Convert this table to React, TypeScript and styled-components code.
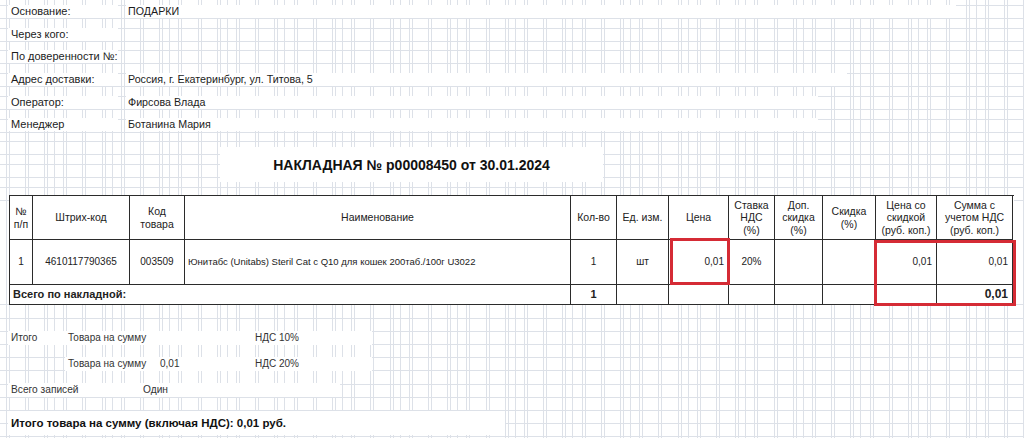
import React from "react";
import styled, { createGlobalStyle } from "styled-components";

const LINE = "#dde1e8";

const vLines: number[] = [];
for (let k = -18; k <= 37; k++) {
  const x = 332 + 19.2 * k;
  if (x >= 0 && x <= 1024) {
    vLines.push(Math.round(x));
    vLines.push(Math.round(x + 3));
  }
  if (k % 3 === 0) {
    const s = Math.round(x + 10);
    if (s >= 0 && s <= 1024) vLines.push(s);
  }
}
const hLines: number[] = [];
for (let k = 0; k < 9; k++) {
  hLines.push(Math.round(5 + 22.7 * k));
  hLines.push(Math.round(18 + 22.7 * k));
}
for (let k = 0; k < 11; k++) hLines.push(Math.round(304.4 + 13.2 * k));

const gridLayers = [
  ...vLines.map(() => `linear-gradient(${LINE}, ${LINE})`),
  ...hLines.map(() => `linear-gradient(${LINE}, ${LINE})`),
].join(",");
const gridPos = [
  ...vLines.map((x) => `${x}px 0`),
  ...hLines.map((y) => `0 ${y}px`),
].join(",");
const gridSize = [
  ...vLines.map(() => `1px 100%`),
  ...hLines.map(() => `100% 1px`),
].join(",");

const Global = createGlobalStyle`
  html, body { margin: 0; padding: 0; background: #fff; }
  body { font-family: "Liberation Sans", Arial, sans-serif; color: #1c1c1c; }
`;

const Page = styled.div`
  width: 1024px;
  height: 438px;
  overflow: hidden;
  background-color: #fff;
  background-image: ${gridLayers};
  background-position: ${gridPos};
  background-size: ${gridSize};
  background-repeat: no-repeat;
  display: flex;
  flex-direction: column;
  & > * {
    flex-shrink: 0;
  }
`;

const Info = styled.div`
  display: flex;
  flex-direction: column;
  padding-top: 5px;
`;

const InfoRow = styled.div`
  height: 22.7px;
  display: flex;
  align-items: flex-start;
`;

const Label = styled.div`
  margin-left: 8px;
  width: 110px;
  height: 13px;
  padding-left: 3px;
  box-sizing: border-box;
  background: #fff;
  font-size: 11px;
  line-height: 13px;
  white-space: nowrap;
`;

const Value = styled.div<{ $w: number }>`
  margin-left: 8px;
  width: ${(p) => p.$w}px;
  height: 13px;
  padding-left: 2px;
  box-sizing: border-box;
  background: #fff;
  font-size: 10.7px;
  line-height: 13px;
  white-space: nowrap;
`;

const TitleBand = styled.div`
  margin: 6px 0 0 220px;
  width: 383px;
  height: 35px;
  background: #fff;
  display: flex;
  align-items: center;
  justify-content: center;
  font-weight: bold;
  font-size: 14px;
  color: #111;
`;

const Table = styled.div`
  position: relative;
  margin: 13px 0 0 9px;
  width: 1005px;
  box-sizing: border-box;
  border-left: 1px solid #2b2b2b;
  border-top: 1px solid #2b2b2b;
  display: grid;
  grid-template-columns: 23px 97px 55px 386px 46px 52px 60px 46px 48px 53px 61px 76px;
  grid-template-rows: 44px 45px 20px;
  background: #fff;
`;

const Cell = styled.div<{ $align?: "left" | "center" | "right"; $bold?: boolean; $span?: number; $size?: number }>`
  border-right: 1px solid #2b2b2b;
  border-bottom: 1px solid #2b2b2b;
  display: flex;
  align-items: center;
  justify-content: ${(p) => (p.$align === "left" ? "flex-start" : p.$align === "right" ? "flex-end" : "center")};
  text-align: ${(p) => p.$align ?? "center"};
  padding: 0 ${(p) => (p.$align === "right" ? 4 : 1)}px 0 ${(p) => (p.$align === "left" ? 3 : 1)}px;
  font-size: ${(p) => p.$size ?? 10}px;
  line-height: 12.5px;
  font-weight: ${(p) => (p.$bold ? "bold" : "normal")};
  grid-column: ${(p) => (p.$span ? `span ${p.$span}` : "auto")};
  white-space: pre-line;
  color: #222;
`;

const RedFrame = styled.div<{ $l: number; $t: number; $w: number; $h: number }>`
  position: absolute;
  left: ${(p) => p.$l}px;
  top: ${(p) => p.$t}px;
  width: ${(p) => p.$w}px;
  height: ${(p) => p.$h}px;
  box-sizing: border-box;
  border: 3px solid #d52b35;
  pointer-events: none;
`;

const Summary = styled.div`
  display: flex;
  flex-direction: column;
  margin-top: 25px;
`;

const SumRow = styled.div<{ $mt: number }>`
  display: grid;
  grid-template-columns: 57px 92px 95px 120px;
  margin: ${(p) => p.$mt}px 0 0 8px;
  height: 16px;
  align-items: center;
  font-size: 10px;
  color: #333;
`;

const SumText = styled.div`
  padding-left: 3px;
  background: #fff;
  height: 14px;
  line-height: 14px;
  white-space: nowrap;
`;

const CountRow = styled.div`
  display: grid;
  grid-template-columns: 132px 200px;
  margin: 10px 0 0 8px;
  height: 16px;
  align-items: center;
  font-size: 10.2px;
  color: #333;
`;

const TotalBand = styled.div`
  margin: 13px 0 0 8px;
  width: 497px;
  height: 24px;
  background: #fff;
  padding-left: 3px;
  box-sizing: border-box;
  display: flex;
  align-items: center;
  font-weight: bold;
  font-size: 11.5px;
  color: #111;
`;

const infoRows = [
  { label: "Основание:", value: "ПОДАРКИ", w: 830 },
  { label: "Через кого:" },
  { label: "По доверенности №:" },
  { label: "Адрес доставки:", value: "Россия, г. Екатеринбург, ул. Титова, 5", w: 721 },
  { label: "Оператор:", value: "Фирсова Влада", w: 692 },
  { label: "Менеджер", value: "Ботанина Мария", w: 692 },
];

const headers = [
  "№\nп/п",
  "Штрих-код",
  "Код\nтовара",
  "Наименование",
  "Кол-во",
  "Ед. изм.",
  "Цена",
  "Ставка\nНДС\n(%)",
  "Доп.\nскидка\n(%)",
  "Скидка\n(%)",
  "Цена со\nскидкой\n(руб. коп.)",
  "Сумма с\nучетом НДС\n(руб. коп.)",
];

export default function App() {
  return (
    <>
      <Global />
      <Page>
        <Info>
          {infoRows.map((r) => (
            <InfoRow key={r.label}>
              <Label>{r.label}</Label>
              {r.value && <Value $w={r.w!}>{r.value}</Value>}
            </InfoRow>
          ))}
        </Info>
        <TitleBand>НАКЛАДНАЯ № р00008450 от 30.01.2024</TitleBand>
        <Table>
          {headers.map((h) => (
            <Cell key={h} $size={10.5}>{h}</Cell>
          ))}
          <Cell>1</Cell>
          <Cell>4610117790365</Cell>
          <Cell>003509</Cell>
          <Cell $align="left" $size={9.5}>Юнитабс (Unitabs) Steril Cat с Q10 для кошек 200таб./100г U3022</Cell>
          <Cell>1</Cell>
          <Cell>шт</Cell>
          <Cell $align="right">0,01</Cell>
          <Cell>20%</Cell>
          <Cell />
          <Cell />
          <Cell $align="right">0,01</Cell>
          <Cell $align="right">0,01</Cell>
          <Cell $align="left" $bold $span={4} $size={11}>Всего по накладной:</Cell>
          <Cell $bold $size={11}>1</Cell>
          <Cell />
          <Cell />
          <Cell />
          <Cell />
          <Cell />
          <Cell />
          <Cell $align="right" $bold $size={12}>0,01</Cell>
          <RedFrame $l={660} $t={42} $w={60} $h={47} />
          <RedFrame $l={864} $t={44} $w={142} $h={66} />
        </Table>
        <Summary>
          <SumRow $mt={0}>
            <SumText>Итого</SumText>
            <SumText>Товара на сумму</SumText>
            <SumText />
            <SumText>НДС 10%</SumText>
          </SumRow>
          <SumRow $mt={10}>
            <div />
            <SumText>Товара на сумму</SumText>
            <SumText>0,01</SumText>
            <SumText>НДС 20%</SumText>
          </SumRow>
          <CountRow>
            <SumText>Всего записей</SumText>
            <SumText>Один</SumText>
          </CountRow>
          <TotalBand>Итого товара на сумму (включая НДС): 0,01 руб.</TotalBand>
        </Summary>
      </Page>
    </>
  );
}
